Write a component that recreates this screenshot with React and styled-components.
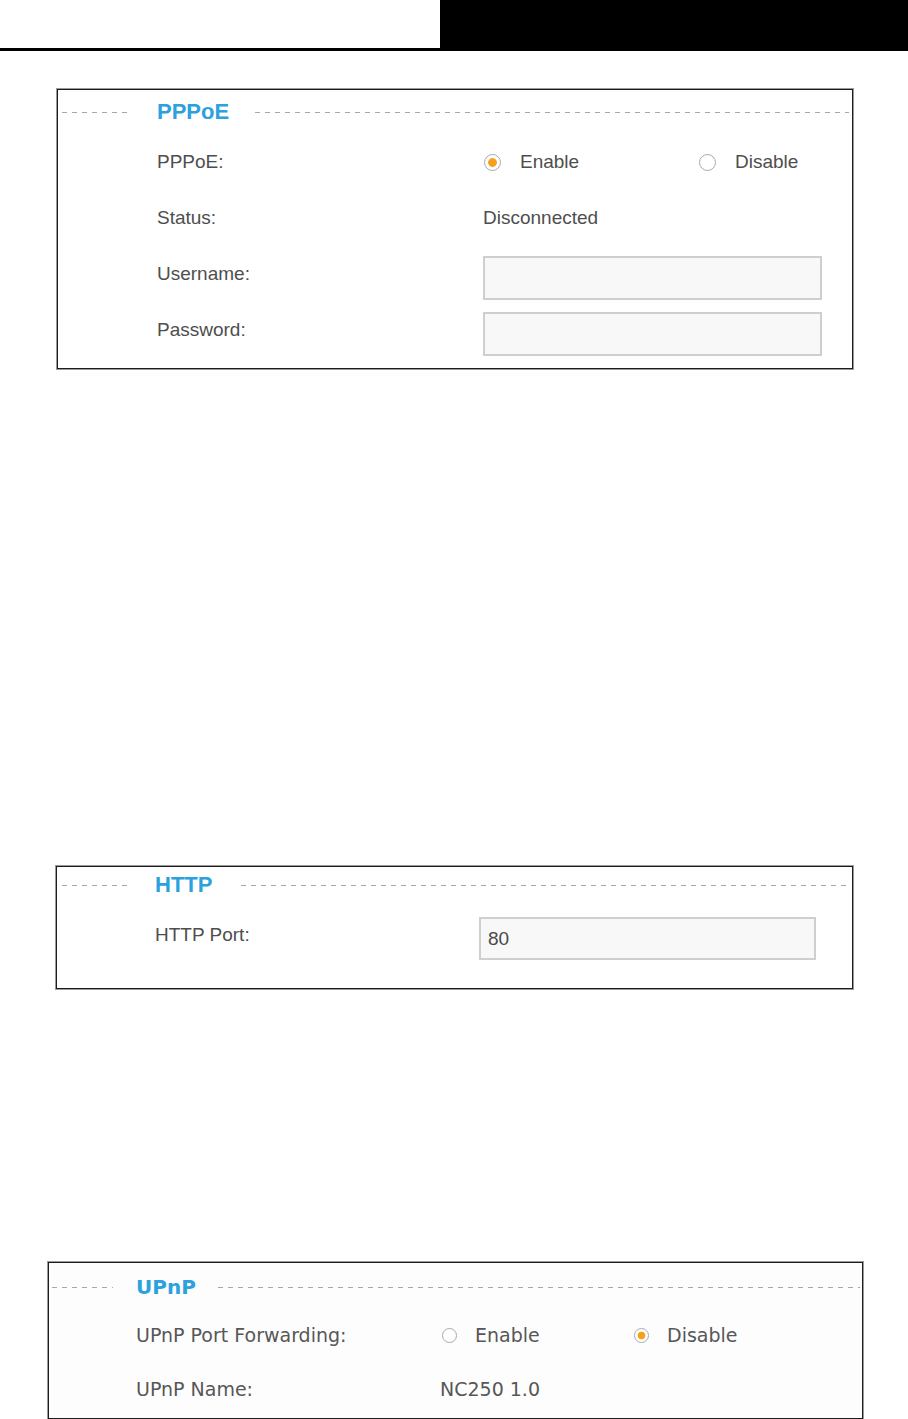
import styled, { createGlobalStyle, css } from "styled-components";

const GlobalStyle = createGlobalStyle`
  html, body {
    margin: 0;
    padding: 0;
    background: #ffffff;
  }
  body {
    width: 908px;
    font-family: "Liberation Sans", Arial, sans-serif;
  }
`;

const fonts = {
  arial: `"Liberation Sans", Arial, sans-serif`,
  dejavu: `"DejaVu Sans", Verdana, sans-serif`,
};

// HEADER
const Header = styled.header`
  display: flex;
  height: 48px;
  border-bottom: 3px solid #000;
`;

const HeaderBlank = styled.div`
  width: 440px;
`;

const HeaderBlock = styled.div`
  flex: 1;
  background: #000;
`;

// PANELS
const Panel = styled.section`
  box-sizing: border-box;
  margin-left: ${(p) => p.$left}px;
  margin-top: ${(p) => p.$top}px;
  width: ${(p) => p.$width}px;
  border: 1px solid #1c1c1c;
  box-shadow: 0 0 0 1px #9a9a9a;
  background: ${(p) => p.$bg || "#fff"};
  padding-bottom: ${(p) => p.$bottom}px;
  font-family: ${(p) => fonts[p.$font]};
  --indent: ${(p) => p.$indent}px;
  --label-w: ${(p) => p.$labelW}px;
  --text: ${(p) => p.$text || "#4e4e4e"};
`;

const TitleRow = styled.div`
  display: flex;
  align-items: center;
  height: ${(p) => p.$height}px;
  padding-top: ${(p) => p.$lift || 0}px;
  padding-left: ${(p) => p.$dashStart}px;
  padding-right: ${(p) => p.$dashEnd}px;
`;

const Dash = styled.span`
  height: 1px;
  background: repeating-linear-gradient(
    to right,
    #a8a8a8 0 5px,
    transparent 5px 10px
  );
  ${(p) =>
    p.$grow
      ? css`
          flex: 1;
        `
      : css`
          width: ${p.$w}px;
        `}
`;

const Title = styled.h2`
  margin: 0 ${(p) => p.$after}px 0 ${(p) => p.$before}px;
  font-size: ${(p) => p.$size}px;
  font-weight: bold;
  color: #2ba1dd;
  line-height: 1;
`;

const FormRow = styled.div`
  display: flex;
  align-items: center;
  height: ${(p) => p.$height}px;
  padding-left: var(--indent);
`;

const Label = styled.span`
  width: var(--label-w);
  font-size: ${(p) => p.$size}px;
  color: var(--text);
`;

const Value = styled.span`
  font-size: ${(p) => p.$size}px;
  color: var(--text);
`;

const Option = styled.label`
  display: inline-flex;
  align-items: center;
  width: ${(p) => p.$w}px;
  font-size: ${(p) => p.$size}px;
  color: var(--text);
`;

const RadioMark = styled.span`
  box-sizing: border-box;
  width: ${(p) => p.$d}px;
  height: ${(p) => p.$d}px;
  margin-left: ${(p) => p.$offset}px;
  margin-right: ${(p) => p.$gap}px;
  border-radius: 50%;
  border: 1px solid #a9a9a9;
  background: ${(p) =>
    p.$on
      ? `radial-gradient(circle, #f7a11a 0 ${p.$dot}px, #fff ${p.$dot + 0.7}px)`
      : "#fff"};
`;

const TextBox = styled.div`
  box-sizing: border-box;
  width: ${(p) => p.$w}px;
  height: ${(p) => p.$h}px;
  margin-top: 7px;
  border: 2px solid #cfcfcf;
  background: #f8f8f8;
  display: flex;
  align-items: center;
  padding-left: 7px;
  font-size: 19px;
  color: #484848;
`;

function Radio({ on, children, w, size, d, dot, gap, offset = 1 }) {
  return (
    <Option $w={w} $size={size}>
      <RadioMark $on={on} $d={d} $dot={dot} $gap={gap} $offset={offset} />
      {children}
    </Option>
  );
}

export default function App() {
  return (
    <>
      <GlobalStyle />
      <Header>
        <HeaderBlank />
        <HeaderBlock />
      </Header>

      <Panel $left={57} $top={38} $width={796} $bottom={10} $font="arial" $indent={99} $labelW={326}>
        <TitleRow $height={44} $dashStart={4} $dashEnd={3}>
          <Dash $w={70} />
          <Title $size={22} $before={25} $after={26}>PPPoE</Title>
          <Dash $grow />
        </TitleRow>
        <FormRow $height={56}>
          <Label $size={19}>PPPoE:</Label>
          <Radio on w={215} size={19} d={17} dot={4} gap={19}>Enable</Radio>
          <Radio w={120} size={19} d={17} dot={4} gap={19}>Disable</Radio>
        </FormRow>
        <FormRow $height={56}>
          <Label $size={19}>Status:</Label>
          <Value $size={19}>Disconnected</Value>
        </FormRow>
        <FormRow $height={56}>
          <Label $size={19}>Username:</Label>
          <TextBox $w={339} $h={44} />
        </FormRow>
        <FormRow $height={56}>
          <Label $size={19}>Password:</Label>
          <TextBox $w={339} $h={44} />
        </FormRow>
      </Panel>

      <Panel $left={56} $top={497} $width={797} $bottom={21} $font="arial" $indent={98} $labelW={324}>
        <TitleRow $height={36} $dashStart={5} $dashEnd={3}>
          <Dash $w={68} />
          <Title $size={22} $before={25} $after={29}>HTTP</Title>
          <Dash $grow />
        </TitleRow>
        <FormRow $height={64}>
          <Label $size={19}>HTTP Port:</Label>
          <TextBox $w={337} $h={43}>80</TextBox>
        </FormRow>
      </Panel>

      <Panel
        $left={48}
        $top={273}
        $width={815}
        $bottom={2}
        $bg="#fdfdfd"
        $font="dejavu"
        $text="#575757"
        $indent={87}
        $labelW={304}
      >
        <TitleRow $height={42} $lift={3} $dashStart={3} $dashEnd={2}>
          <Dash $w={61} />
          <Title $size={20} $before={23} $after={22}>UPnP</Title>
          <Dash $grow />
        </TitleRow>
        <FormRow $height={54}>
          <Label $size={19}>UPnP Port Forwarding:</Label>
          <Radio w={192} size={19} d={15} dot={3.5} gap={18} offset={2}>Enable</Radio>
          <Radio on w={120} size={19} d={15} dot={3.5} gap={18} offset={2}>Disable</Radio>
        </FormRow>
        <FormRow $height={54}>
          <Label $size={19}>UPnP Name:</Label>
          <Value $size={19}>NC250 1.0</Value>
        </FormRow>
      </Panel>
    </>
  );
}
